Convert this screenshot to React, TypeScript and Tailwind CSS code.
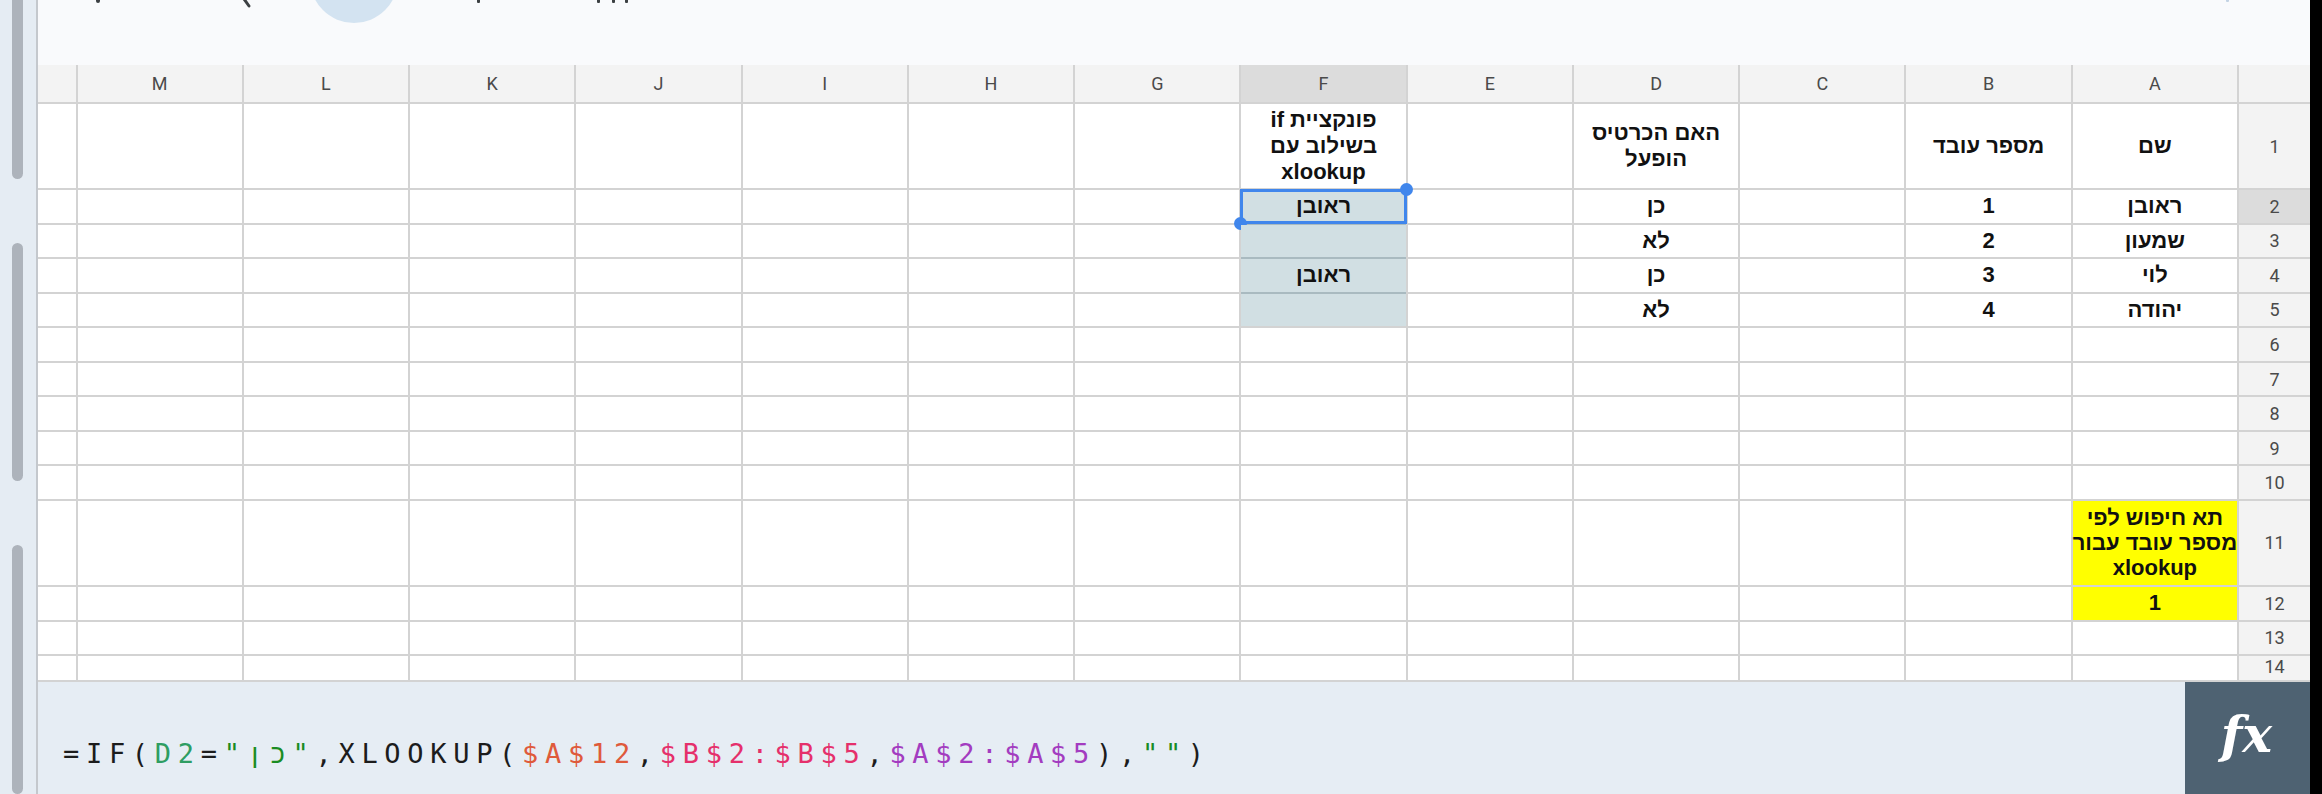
import React from "react";

const COLS = ["A", "B", "C", "D", "E", "F", "G", "H", "I", "J", "K", "L", "M"];

const cellFont =
  "font-['Liberation_Sans','DejaVu_Sans',sans-serif] font-bold text-[22px] leading-[26px] text-[#111] whitespace-nowrap";
const headFont = "font-['Roboto',sans-serif] text-[18px] text-[#4a4a4a]";

const DATA: Record<number, Record<string, React.ReactNode>> = {
  1: {
    A: "שם",
    B: "מספר עובד",
    D: (
      <>
        האם הכרטיס
        <br />
        הופעל
      </>
    ),
    F: (
      <>
        פונקציית if
        <br />
        בשילוב עם
        <br />
        xlookup
      </>
    ),
  },
  2: { A: "ראובן", B: "1", D: "כן" },
  3: { A: "שמעון", B: "2", D: "לא" },
  4: { A: "לוי", B: "3", D: "כן" },
  5: { A: "יהודה", B: "4", D: "לא" },
  11: {
    A: (
      <span className="leading-[25px]">
        תא חיפוש לפי
        <br />
        מספר עובד עבור
        <br />
        xlookup
      </span>
    ),
  },
  12: { A: "1" },
};

const RANGE_F = ["ראובן", "", "ראובן", ""];

function SelectedRange() {
  return (
    <div className="row-span-4 bg-[#a9bac0] flex flex-col gap-[2px] relative z-10">
      {RANGE_F.map((v, i) => (
        <div
          key={i}
          className={`flex-1 bg-[#d1dfe3] flex items-center justify-center relative ${cellFont}`}
        >
          {v}
          {i === 0 && (
            <>
              <div className="absolute -inset-[1px] border-[3px] border-[#4086ec]" />
              <div className="absolute -top-[7px] -right-[7px] w-[13px] h-[13px] rounded-full bg-[#4086ec]" />
              <div className="absolute -bottom-[7px] -left-[7px] w-[13px] h-[13px] rounded-full bg-[#4086ec]" />
            </>
          )}
        </div>
      ))}
    </div>
  );
}

function Grid() {
  const rows = [];
  // header row
  rows.push(<div key="h-corner" className="bg-[#f3f3f3]" />);
  COLS.forEach((c) => {
    rows.push(
      <div
        key={"h" + c}
        className={`flex items-center justify-center ${headFont} ${c === "F" ? "bg-[#dcdcdc]" : "bg-[#f3f3f3]"}`}
      >
        {c}
      </div>
    );
  });
  rows.push(<div key="h-rest" className="bg-[#f3f3f3]" />);

  for (let r = 1; r <= 14; r++) {
    rows.push(
      <div
        key={"n" + r}
        className={`flex justify-center ${headFont} ${r === 2 ? "bg-[#dcdcdc]" : "bg-[#f3f3f3]"} ${r === 14 ? "items-end" : "items-center"}`}
      >
        {r}
      </div>
    );
    COLS.forEach((c) => {
      if (c === "F" && r >= 3 && r <= 5) return;
      if (c === "F" && r === 2) {
        rows.push(<SelectedRange key="range" />);
        return;
      }
      const yellow = c === "A" && (r === 11 || r === 12);
      rows.push(
        <div
          key={r + c}
          className={`flex items-center justify-center text-center ${cellFont} ${yellow ? "bg-[#ffff00]" : "bg-white"}`}
        >
          {DATA[r]?.[c]}
        </div>
      );
    });
    rows.push(<div key={"rest" + r} className="bg-white" />);
  }

  return (
    <div
      dir="rtl"
      className="grid grid-cols-[71px_repeat(13,164.27px)_1fr] grid-rows-[37px_84px_repeat(9,32.56px)_84px_32.6px_32.6px_24px] gap-[2px] pb-[2px] bg-[#d3d3d3]"
    >
      {rows}
    </div>
  );
}

function Toolbar() {
  return (
    <div className="h-[65px] bg-[#f9fafc] overflow-hidden">
      <svg width="2272" height="65" viewBox="0 0 2272 65">
        <rect x="58" y="-3" width="4" height="6" rx="2" fill="#3c4043" />
        <line x1="206" y1="-1" x2="211" y2="6" stroke="#3c4043" strokeWidth="3" strokeLinecap="round" />
        <circle cx="316" cy="-21" r="44" fill="#d3e3f1" />
        <rect x="439" y="-2" width="3" height="5" rx="1" fill="#3c4043" />
        <rect x="559" y="-2" width="3" height="5" rx="1" fill="#3c4043" />
        <rect x="574" y="-2" width="3" height="5" rx="1" fill="#3c4043" />
        <rect x="587" y="-2" width="3" height="5" rx="1" fill="#3c4043" />
        <rect x="2188" y="-2" width="3" height="4" rx="1" fill="#c3d3e4" />
      </svg>
    </div>
  );
}

function FormulaBar() {
  return (
    <div className="flex-1 flex bg-[#e6edf4]">
      <div className="flex-1 pl-[25px] pt-[56px]">
        <div className="font-['DejaVu_Sans_Mono','Liberation_Mono',monospace] text-[27px] leading-[32px] tracking-[6.7px] text-[#1c1c1c] whitespace-pre">
          <span>=IF(</span>
          <span className="text-[#2e9d62]">D2</span>
          <span>=</span>
          <span className="text-[#1a8c23]">"כן"</span>
          <span>,XLOOKUP(</span>
          <span className="text-[#df5a3b]">$A$12</span>
          <span>,</span>
          <span className="text-[#e5306b]">$B$2:$B$5</span>
          <span>,</span>
          <span className="text-[#a33cc0]">$A$2:$A$5</span>
          <span>),</span>
          <span className="text-[#1a8c23]">""</span>
          <span>)</span>
        </div>
      </div>
      <div className="w-[125px] bg-[#4e6272] flex items-center justify-center">
        <span className="font-['DejaVu_Serif',serif] italic font-bold text-[50px] leading-none text-white pr-[2px] pb-[6px]">
          fx
        </span>
      </div>
    </div>
  );
}

export default function App() {
  return (
    <div className="w-[2322px] h-[794px] flex bg-black overflow-hidden">
      <aside className="w-[38px] shrink-0 bg-[#e5ecf3] border-r-2 border-[#c4c8cd] flex flex-col items-center gap-[64px] pr-[1px]">
        <div className="w-[11px] h-[190px] -mt-[10px] rounded-full bg-[#adb3bb]" />
        <div className="w-[11px] h-[239px] rounded-full bg-[#adb3bb]" />
        <div className="w-[11px] h-[250px] rounded-full bg-[#adb3bb]" />
      </aside>
      <main className="w-[2272px] shrink-0 flex flex-col">
        <Toolbar />
        <Grid />
        <FormulaBar />
      </main>
      <div className="flex-1 bg-black" />
    </div>
  );
}
